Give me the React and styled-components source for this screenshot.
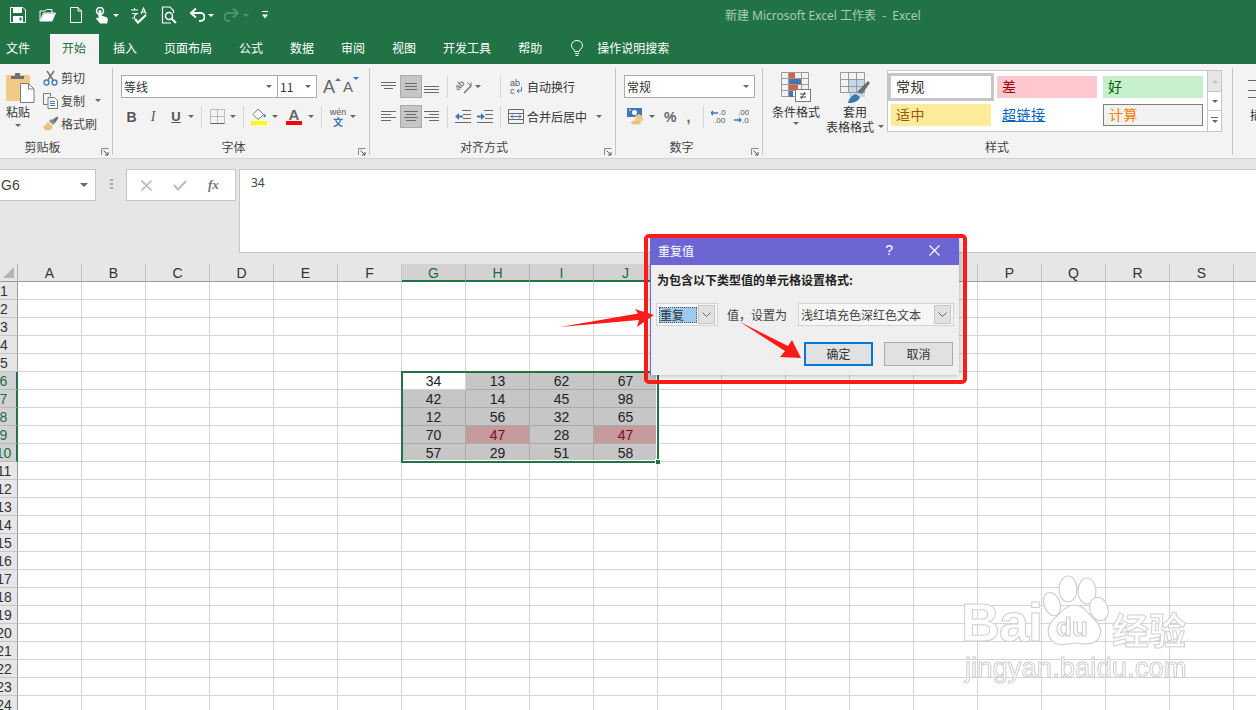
import styled, { createGlobalStyle } from 'styled-components'

const cjk = `"Noto Sans CJK SC", "Noto Sans", sans-serif`
const latin = `"Liberation Sans", "Noto Sans CJK SC", sans-serif`
const green = '#217346'

const GlobalStyle = createGlobalStyle`
  html, body { margin: 0; padding: 0; background: #fff; }
  #root { width: 1256px; height: 710px; overflow: hidden; }
  * { box-sizing: border-box; }
`

// ICONS
const Glyph = styled.svg`
  display: block;
  flex-shrink: 0;
`

const Icon = ({ w = 16, h = 16, children }) => (
  <Glyph width={w} height={h} viewBox={`0 0 ${w} ${h}`} fill="none">{children}</Glyph>
)

const SaveIcon = () => (
  <Icon>
    <path d="M.5.5h12.5l2.5 2.5v12.5H.5z" stroke="#fff" />
    <path d="M3 1h9v5H3zM3 9h10v6H3z" fill="#fff" />
    <path d="M9.5 10.500h2v3h-2z" fill={green} />
  </Icon>
)
const OpenIcon = () => (
  <Icon w={17}>
    <path d="M1 14V4h5l1.500-1.500H13V6H4.500L1 14h12l3.500-8H13" stroke="#fff" />
    <path d="M1.500 14l3.500-7.500h11L13 14z" fill="#fff" />
  </Icon>
)
const NewIcon = () => (
  <Icon w={12}>
    <path d="M.5.5h7.500l3.500 3.500v11.500H.5z" stroke="#fff" />
    <path d="M8 .5V4h3.500" stroke="#fff" />
  </Icon>
)
const TouchIcon = () => (
  <Icon w={14} h={17}>
    <circle cx="5" cy="4" r="3.500" stroke="#fff" strokeWidth="1.500" />
    <path d="M3.500 4.500a1.500 1.500 0 013 0v4l4.500 1.500c1.500.5 2 1.500 1.800 3l-.6 3.500H5L1 11.500l1-1 1.500 1z" fill="#fff" />
  </Icon>
)
const SpellIcon = () => (
  <Icon w={17} h={17}>
    <path d="M1 3h7M4.500 1v2M2 6.500h5L4.500 8.500v2.500H2M11 7l2.500-6L16 7M12 5h3" stroke="#fff" strokeWidth="1.100" />
    <path d="M5 12l3 3.500L16 8" stroke="#fff" strokeWidth="2.200" />
  </Icon>
)
const PreviewIcon = () => (
  <Icon w={16} h={18}>
    <path d="M10 17H1.500V1H9l3.500 3.500V7" stroke="#fff" strokeWidth="1.200" />
    <circle cx="8" cy="10" r="3.500" stroke="#fff" strokeWidth="1.500" />
    <path d="M10.500 12.500L15 17" stroke="#fff" strokeWidth="2" />
  </Icon>
)
const UndoIcon = () => (
  <Icon w={16} h={14}>
    <path d="M10 13h1.500a3.800 3.800 0 000-8H2" stroke="#fff" strokeWidth="2" />
    <path d="M7 .5L2 5l5 4.500" stroke="#fff" strokeWidth="2" />
  </Icon>
)
const RedoIcon = () => (
  <Icon w={16} h={14}>
    <path d="M6 13H4.500a3.800 3.800 0 010-8H14M9 .5L14 5 9 9.500" stroke="#4e9471" strokeWidth="2" />
  </Icon>
)
const CustomizeIcon = () => (
  <Icon w={8} h={10}>
    <path d="M1 1.500h6" stroke="#fff" />
    <path d="M1 4.500h6L4 8.500z" fill="#fff" />
  </Icon>
)
const BulbIcon = () => (
  <Icon w={12} h={16}>
    <path d="M3.800 11.500c0-2-3.300-3-3.300-6a5.500 5 0 0111 0c0 3-3.300 4-3.300 6z" stroke="#fff" />
    <path d="M4 13.500h4M4.500 15.500h3" stroke="#fff" />
  </Icon>
)
const PasteIcon = () => (
  <Icon w={29} h={31}>
    <rect x="0" y="3" width="24" height="26" rx="1.500" fill="#f0c987" />
    <path d="M5 7V4h4V1h5v3h4v3z" fill="#6f6f6f" />
    <path d="M14.500 11.500h8l5.500 5.500v13.500H14.500z" fill="#fff" stroke="#7a7a7a" />
    <path d="M22.500 11.500V17H28" stroke="#7a7a7a" />
  </Icon>
)
const CutIcon = () => (
  <Icon>
    <path d="M4 1l6 9M11 1L5 10" stroke="#777" strokeWidth="1.600" />
    <circle cx="3.500" cy="12.500" r="2.500" stroke="#3f78b5" strokeWidth="1.300" />
    <circle cx="11.500" cy="12.500" r="2.500" stroke="#3f78b5" strokeWidth="1.300" />
  </Icon>
)
const CopyIcon = () => (
  <Icon>
    <path d="M.5.5h7v3M.5.5v11h4" stroke="#777" />
    <path d="M5 4.500h6.500l3 3v8H5z" fill="#fff" stroke="#777" />
    <path d="M7 8.500h5M7 10.500h5M7 12.500h5" stroke="#3f78b5" />
  </Icon>
)
const BrushIcon = () => (
  <Icon>
    <path d="M0 11l5-5 5 5-3 3.500-3-.5-1 1z" fill="#e9c27f" />
    <path d="M6 5l2-2 4 4-2 2z" fill="#8a8a8a" />
    <path d="M9 4l5-3.500L15.500 2 12 7z" fill="#6f6f6f" />
  </Icon>
)
const BordersIcon = () => (
  <Icon w={15} h={15}>
    <path d="M.5.5h14v14H.5zM7.500.5v14M.5 7.500h14" stroke="#888" strokeDasharray="1 1" />
    <path d="M.5 14.500h14" stroke="#666" />
  </Icon>
)
const FillIcon = () => (
  <Icon w={17} h={17}>
    <path d="M7 1l5.500 5.500L7 11.500 2 6.500z" fill="#fff" stroke="#777" />
    <path d="M13 5.500l2 2.500-1 1.500-1.500-1z" fill="#3f78b5" />
    <rect y="13" width="16" height="4" fill="#ffff00" />
  </Icon>
)
const Lines = ({ lines, w = 16, h = 15, color = '#6a6a6a' }) => (
  <Icon w={w} h={h}>
    {lines.map(([a, b, y], i) => (
      <path key={i} d={`M${a} ${y + 0.5}H${b}`} stroke={color} />
    ))}
  </Icon>
)
const OrientIcon = () => (
  <Icon w={17} h={15}>
    <text x="0" y="0" transform="translate(2 12) rotate(-45)" fontFamily={latin} fontSize="9" fill="#555">ab</text>
    <path d="M8 14l7-7" stroke="#666" strokeWidth="1.200" />
    <path d="M11.500 3.500L15 7M15 7v-3.500" stroke="#3f78b5" />
  </Icon>
)
const IndentIcon = ({ flip }) => (
  <Icon w={16} h={13}>
    <path d="M7 .5h9M8 4.500h8M8 8.500h8M0 12.500h16" stroke="#6a6a6a" />
    {flip
      ? <path d="M0 5.500h4V3l4 3.500L4 10V7.500H0z" fill="#3f78b5" />
      : <path d="M8 5.500H4V3L0 6.500 4 10V7.500h4z" fill="#3f78b5" />}
  </Icon>
)
const WrapIcon = () => (
  <Icon w={14} h={16}>
    <text x="1" y="7" fontFamily={latin} fontSize="9" fill="#555">ab</text>
    <text x="1" y="15" fontFamily={latin} fontSize="9" fill="#555">c</text>
    <path d="M12.500 8v4H8M10 10l-2 2 2 2" stroke="#3f78b5" />
  </Icon>
)
const MergeIcon = () => (
  <Icon w={16} h={15}>
    <path d="M.5.5h15v14H.5zM.5 4.500h15M.5 10.500h15" stroke="#6a6a6a" />
    <path d="M3 7.500h10M5 5.500l-2 2 2 2M11 5.500l2 2-2 2" stroke="#3f78b5" />
  </Icon>
)
const MoneyIcon = () => (
  <Icon w={17} h={17}>
    <path d="M0 0h15v9H0z" fill="#3f78b5" />
    <circle cx="7.500" cy="4.500" r="2.500" fill="#fff" />
    <path d="M2 2h2M11 7h2" stroke="#fff" />
    <ellipse cx="12" cy="8.500" rx="4" ry="1.800" fill="#e9c27f" />
    <ellipse cx="12" cy="11.500" rx="4.500" ry="1.800" fill="#f0c987" />
    <ellipse cx="9" cy="14.500" rx="5" ry="2" fill="#e9c27f" />
  </Icon>
)
const DecimalIcon = ({ more }) => (
  <Icon w={16} h={15}>
    <text x={more ? 5 : 8} y="6" fontFamily={latin} fontSize="8" fill="#555">{more ? '.00' : '.0'}</text>
    <text x={more ? 9 : 3} y="14" fontFamily={latin} fontSize="8" fill="#555">{more ? '.0' : '.00'}</text>
    {more
      ? <path d="M1 11h7M6 9l2 2-2 2" stroke="#3f78b5" strokeWidth="1.300" />
      : <path d="M7 4H0M2 2L0 4l2 2" stroke="#3f78b5" strokeWidth="1.300" />}
  </Icon>
)
const CondIcon = () => (
  <Icon w={31} h={32}>
    <path d="M.5.5h27v24H.5zM7.500.5v24M20.500.500v24M.5 6.500h27M.5 12.500h27M.5 18.500h27" stroke="#9a9a9a" />
    <rect x="8" y="1" width="6" height="5" fill="#d8603c" />
    <rect x="8" y="7" width="12" height="5" fill="#3f78b5" />
    <rect x="8" y="13" width="9" height="5" fill="#d8603c" />
    <rect x="8" y="19" width="4" height="6" fill="#3f78b5" />
    <rect x="14.500" y="17.500" width="15" height="12" fill="#fff" stroke="#7a7a7a" />
    <path d="M19 22h6M19 25h6M24 20l-4 7" stroke="#444" />
  </Icon>
)
const TableIcon = () => (
  <Icon w={31} h={32}>
    <rect x="9" y="7" width="16" height="18" fill="#c5d7ea" />
    <path d="M.5.5h24v20H.5zM8.500.5v20M16.500.5v20M.5 7.500h24M.5 14.500h24" stroke="#9a9a9a" />
    <path d="M17 20l11-11 2 2-8 11z" fill="#6f6f6f" />
    <path d="M8 31c1-5 4-8 8-9l4 3c-1 4-6 6-12 6z" fill="#3f78b5" />
  </Icon>
)
const Launcher = () => (
  <Icon w={8} h={8}>
    <path d="M.5 7V.5H7.500" stroke="#8a8a8a" />
    <path d="M2.500 2.500L7 7M7 4v3H4" stroke="#555" />
  </Icon>
)
const XIcon = ({ color = '#bdbdbd', size = 11, sw = 1.600 }) => (
  <Icon w={size} h={size}>
    <path d={`M.5.5L${size - 0.5} ${size - 0.5}M${size - 0.5} .5L.5 ${size - 0.5}`} stroke={color} strokeWidth={sw} />
  </Icon>
)
const CheckIcon = () => (
  <Icon w={14} h={11}>
    <path d="M1 5l4 4.500L13 1" stroke="#bdbdbd" strokeWidth="2.200" />
  </Icon>
)
const ChevronIcon = () => (
  <Icon w={9} h={5}>
    <path d="M.5.5l4 4 4-4" stroke="#666" />
  </Icon>
)

// DATA
const tabs = ['文件', '开始', '插入', '页面布局', '公式', '数据', '审阅', '视图', '开发工具', '帮助']
const colLetters = 'ABCDEFGHIJKLMNOPQRST'.split('')
const rowCount = 24
const selCols = ['G', 'H', 'I', 'J']
const values = [
  [34, 13, 62, 67],
  [42, 14, 45, 98],
  [12, 56, 32, 65],
  [70, 47, 28, 47],
  [57, 29, 51, 58]
]

const valueAt = (rowNo, col) => {
  const c = selCols.indexOf(col)
  if (c < 0 || rowNo < 6 || rowNo > 10) return null
  return values[rowNo - 6][c]
}

function Sheet() {
  return (
    <SheetWrap>
      <SheetGrid>
        <Corner><CornerMark /></Corner>
        {colLetters.map((c) => (
          <ColHead key={c} $sel={selCols.includes(c)}>{c}</ColHead>
        ))}
        {Array.from({ length: rowCount }, (_, i) => i + 1).map((r) => (
          <Row key={r} r={r} />
        ))}
      </SheetGrid>
      <Selection><Handle /></Selection>
    </SheetWrap>
  )
}

function Row({ r }) {
  const sel = r >= 6 && r <= 10
  return (
    <>
      <RowHead $sel={sel}><span>{r}</span></RowHead>
      {colLetters.map((c) => {
        const v = valueAt(r, c)
        const isFirst = r === 6 && c === 'G'
        return (
          <Cell key={c} $filled={v !== null && !isFirst} $dup={v === 47}>{v}</Cell>
        )
      })}
    </>
  )
}

function Ribbon() {
  return (
    <RibbonBar>
      <Group $w={113}>
        <ClipBody>
          <PasteCol>
            <PasteIcon />
            <PasteLabel>粘贴</PasteLabel>
            <Caret />
          </PasteCol>
          <ClipList>
            <ClipRow><CutIcon /><span>剪切</span></ClipRow>
            <ClipRow><CopyIcon /><span>复制</span><Caret $ml={8} /></ClipRow>
            <ClipRow><BrushIcon /><span>格式刷</span></ClipRow>
          </ClipList>
        </ClipBody>
        <GroupLabel $pr={28}>剪贴板<LauncherSlot><Launcher /></LauncherSlot></GroupLabel>
      </Group>

      <Group $w={257}>
        <Stack $pl={8}>
          <ToolRow>
            <Combo $w={157}>等线<Caret /></Combo>
            <Combo $w={40} $ml={-1}>11<Caret /></Combo>
            <GrowLetter $size={18} $ml={6}>A<Tri $color="#3f78b5" /></GrowLetter>
            <GrowLetter $size={15} $ml={8}>A<Tri $color="#3f78b5" $down /></GrowLetter>
          </ToolRow>
          <ToolRow>
            <Tool $w={21}><BoldB>B</BoldB></Tool>
            <Tool $w={22}><ItalicI>I</ItalicI></Tool>
            <Tool $w={24}><UnderU>U</UnderU></Tool>
            <Caret $ml={0} />
            <Sep $ml={7} $mr={8} />
            <BordersIcon />
            <Caret $ml={5} />
            <Sep $ml={7} $mr={7} />
            <FillIcon />
            <Caret $ml={4} />
            <Tool $w={28} $ml={2}>
              <ColorStack>
                <ColorLetter>A</ColorLetter>
                <ColorBar />
              </ColorStack>
            </Tool>
            <Caret />
            <Sep $ml={7} $mr={8} />
            <WenStack><span>wén</span><b>文</b></WenStack>
            <Caret $ml={4} />
          </ToolRow>
        </Stack>
        <GroupLabel $pr={16}>字体<LauncherSlot><Launcher /></LauncherSlot></GroupLabel>
      </Group>

      <Group $w={246}>
        <Stack $pl={11}>
          <ToolRow>
            <Tool $w={16}><Lines lines={[[0, 15, 3], [0, 15, 6], [3, 12, 9]]} /></Tool>
            <Toggle $ml={3}><Lines lines={[[2, 14, 4], [2, 14, 7], [2, 14, 10]]} /></Toggle>
            <Tool $w={16} $ml={2}><Lines lines={[[0, 15, 7], [0, 15, 10], [0, 15, 13]]} /></Tool>
            <Sep $ml={7} $mr={8} />
            <OrientIcon />
            <Caret $ml={2} />
            <Sep $ml={19} $mr={8} />
            <WrapIcon />
            <TextLabel $ml={4}>自动换行</TextLabel>
          </ToolRow>
          <ToolRow>
            <Tool $w={16}><Lines lines={[[0, 15, 2], [0, 10, 5], [0, 15, 8], [0, 10, 11]]} /></Tool>
            <Toggle $ml={3}><Lines lines={[[1, 15, 2], [3, 13, 5], [1, 15, 8], [3, 13, 11]]} /></Toggle>
            <Tool $w={16} $ml={2}><Lines lines={[[0, 15, 2], [5, 15, 5], [0, 15, 8], [5, 15, 11]]} /></Tool>
            <Sep $ml={7} $mr={7} />
            <IndentIcon />
            <Tool $w={6} />
            <IndentIcon flip />
            <Sep $ml={7} $mr={7} />
            <MergeIcon />
            <TextLabel $ml={3}>合并后居中</TextLabel>
            <Caret $ml={9} />
          </ToolRow>
        </Stack>
        <GroupLabel $pr={18}>对齐方式<LauncherSlot><Launcher /></LauncherSlot></GroupLabel>
      </Group>

      <Group $w={147}>
        <Stack $pl={8}>
          <ToolRow>
            <Combo $w={131}>常规<Caret /></Combo>
          </ToolRow>
          <ToolRow>
            <Tool $w={3} />
            <MoneyIcon />
            <Caret $ml={5} />
            <Percent $ml={9}>%</Percent>
            <Percent $ml={10}>,</Percent>
            <Sep $ml={13} $mr={7} />
            <DecimalIcon />
            <Tool $w={6} />
            <DecimalIcon more />
          </ToolRow>
        </Stack>
        <GroupLabel $pr={16}>数字<LauncherSlot><Launcher /></LauncherSlot></GroupLabel>
      </Group>

      <Group $w={470}>
        <StyleBody>
          <BigTool $w={60}>
            <CondIcon />
            <BigLabel>条件格式</BigLabel>
            <Caret />
          </BigTool>
          <BigTool $w={58}>
            <TableIcon />
            <BigLabel>套用</BigLabel>
            <BigLabel>表格格式<Caret $ml={4} /></BigLabel>
          </BigTool>
          <Gallery>
            <StyleCells>
              <StyleCell $sel>常规</StyleCell>
              <StyleCell $bg="#ffc7ce" $color="#9c0006">差</StyleCell>
              <StyleCell $bg="#c6efce" $color="#006100">好</StyleCell>
              <StyleCell $bg="#ffeb9c" $color="#9c5700">适中</StyleCell>
              <StyleCell $color="#0563c1" $link>超链接</StyleCell>
              <StyleCell $bg="#f2f2f2" $color="#fa7d00" $boxed>计算</StyleCell>
            </StyleCells>
            <GalleryScroll>
              <ScrollBtn $h={21} $off><ScrollUp /></ScrollBtn>
              <ScrollBtn $h={19}><Caret /></ScrollBtn>
              <ScrollBtn $h={20} $more><Caret /></ScrollBtn>
            </GalleryScroll>
          </Gallery>
        </StyleBody>
        <GroupLabel $pr={2}>样式</GroupLabel>
      </Group>

      <NextGroup>
        <NextIcon><Lines w={8} h={26} color="#6a6a6a" lines={[[0, 8, 8], [0, 8, 18], [0, 8, 25]]} /></NextIcon>
        <NextLabel>插</NextLabel>
      </NextGroup>
    </RibbonBar>
  )
}

function Dialog() {
  return (
    <>
      <DialogWin>
        <DialogTitle>
          <span>重复值</span>
          <TitleHelp>?</TitleHelp>
          <TitleClose><XIcon color="#fff" size={11} sw={1.200} /></TitleClose>
        </DialogTitle>
        <DialogBody>
          <Prompt>为包含以下类型值的单元格设置格式:</Prompt>
          <OptionRow>
            <DialogCombo $w={62}>
              <Picked>重复</Picked>
              <DropBtn><ChevronIcon /></DropBtn>
            </DialogCombo>
            <OptionText>值，设置为</OptionText>
            <DialogCombo $w={156}>
              <ComboText>浅红填充色深红色文本</ComboText>
              <DropBtn><ChevronIcon /></DropBtn>
            </DialogCombo>
          </OptionRow>
          <ButtonRow>
            <DlgButton $primary>确定</DlgButton>
            <DlgButton>取消</DlgButton>
          </ButtonRow>
        </DialogBody>
      </DialogWin>
      <RedBox />
      <Arrows width="1256" height="710" viewBox="0 0 1256 710">
        <path d="M560 327L638 313.500 635 309 654 315 637 327 639 320z" fill="#fb1c17" />
        <path d="M740 322L788 346 792 340 801 358 780 357 785 351z" fill="#fb1c17" />
      </Arrows>
    </>
  )
}

function Watermark() {
  return (
    <Mark>
      <MarkTop>
        <MarkBai>Bai</MarkBai>
        <Glyph width="68" height="78" viewBox="0 0 68 78" fill="#fff" stroke="#cfcfcf" strokeWidth="1.200">
          <ellipse cx="10" cy="31" rx="8" ry="12" transform="rotate(-20 10 31)" />
          <ellipse cx="26" cy="16" rx="9" ry="13" />
          <ellipse cx="45" cy="18" rx="9" ry="13" />
          <ellipse cx="57" cy="36" rx="9" ry="12" transform="rotate(-20 57 36)" />
          <path d="M33 32c9 0 13 9 20 15 7 7 8 16 0 22-6 4-13 1-20 1s-13 4-20 0c-8-5-9-15-3-22 7-6 13-16 23-16z" />
          <text x="14" y="63" fontFamily={latin} fontWeight="700" fontSize="26">du</text>
        </Glyph>
        <MarkCn>经验</MarkCn>
      </MarkTop>
      <MarkUrl>jingyan.baidu.com</MarkUrl>
    </Mark>
  )
}

export default function App() {
  return (
    <Page>
      <GlobalStyle />
      <TitleBar>
        <Qat>
          <SaveIcon />
          <QatGap $w={13} /><OpenIcon />
          <QatGap $w={14} /><NewIcon />
          <QatGap $w={13} /><TouchIcon /><Caret $light $ml={4} />
          <QatGap $w={11} /><SpellIcon />
          <QatGap $w={14} /><PreviewIcon />
          <QatGap $w={12} /><UndoIcon /><Caret $light $ml={3} />
          <QatGap $w={10} /><RedoIcon /><Caret $dimmed $ml={3} />
          <QatGap $w={12} /><CustomizeIcon />
        </Qat>
        <TitleText>新建 Microsoft Excel 工作表&nbsp; - &nbsp;Excel</TitleText>
      </TitleBar>
      <TabBar>
        {tabs.map((t, i) => (
          <Tab key={t} $active={i === 1} $first={i === 0}>{t}</Tab>
        ))}
        <SearchTab><BulbIcon /><span>操作说明搜索</span></SearchTab>
      </TabBar>
      <Ribbon />
      <FormulaArea>
        <NameBox>G6<Caret $big /></NameBox>
        <Grip />
        <FxBox>
          <XIcon />
          <CheckIcon />
          <Fx>fx</Fx>
        </FxBox>
        <FormulaInput>34</FormulaInput>
      </FormulaArea>
      <Sheet />
      <Dialog />
      <Watermark />
    </Page>
  )
}

// STYLES
const Page = styled.div`
  position: relative;
  width: 1256px;
  height: 710px;
  overflow: hidden;
  font-family: ${cjk};
  font-size: 12px;
  color: #333;
  background: #fff;
`

const TitleBar = styled.div`
  display: flex;
  align-items: center;
  height: 34px;
  padding: 0 0 4px 10px;
  background: ${green};
`

const Qat = styled.div`
  display: flex;
  align-items: center;
  width: 715px;
`

const QatGap = styled.span`
  width: ${(p) => p.$w}px;
  flex-shrink: 0;
`

const TitleText = styled.div`
  color: #a9cdb9;
  font-family: "Noto Sans", ${cjk};
  font-size: 12px;
  white-space: nowrap;
`

const TabBar = styled.div`
  display: flex;
  height: 30px;
  background: ${green};
`

const Tab = styled.div`
  display: flex;
  align-items: center;
  height: 30px;
  padding: 0 13px 3px ${(p) => (p.$first ? 6 : p.$active ? 12 : 14)}px;
  ${(p) => p.$first && 'width: 50px;'}
  background: ${(p) => (p.$active ? '#f3f3f3' : 'transparent')};
  color: ${(p) => (p.$active ? green : '#fff')};
  font-size: 12px;
`

const SearchTab = styled.div`
  display: flex;
  align-items: center;
  gap: 14px;
  margin-left: 16px;
  padding-bottom: 3px;
  color: #fff;
`

const RibbonBar = styled.div`
  display: flex;
  height: 95px;
  background: #f3f3f3;
  border-bottom: 1px solid #d2d2d2;
`

const Group = styled.div`
  display: flex;
  flex-direction: column;
  flex-shrink: 0;
  width: ${(p) => p.$w}px;
  position: relative;
  &::after {
    content: '';
    position: absolute;
    right: 0;
    top: 4px;
    bottom: 3px;
    width: 1px;
    background: #c6c6c6;
  }
`

const GroupLabel = styled.div`
  position: relative;
  display: flex;
  align-items: center;
  justify-content: center;
  height: 20px;
  margin-bottom: 1px;
  padding: 0 ${(p) => p.$pr || 0}px 2px 0;
  color: #444;
`

const LauncherSlot = styled.span`
  position: absolute;
  right: 4px;
  bottom: 1px;
`

const ClipBody = styled.div`
  flex: 1;
  display: flex;
  padding: 2px 0 0 6px;
`

const PasteCol = styled.div`
  display: flex;
  flex-direction: column;
  align-items: flex-start;
  width: 37px;
  padding-top: 6px;
  span { margin-left: 9px; }
`

const PasteLabel = styled.div`
  margin-top: 1px;
  height: 20px;
  line-height: 16px;
  color: #333;
`

const ClipList = styled.div`
  display: flex;
  flex-direction: column;
`

const ClipRow = styled.div`
  display: flex;
  align-items: center;
  gap: 2px;
  height: 23px;
  color: #444;
`

const Stack = styled.div`
  flex: 1;
  display: flex;
  flex-direction: column;
  gap: 7px;
  padding: 11px 0 0 ${(p) => p.$pl}px;
`

const ToolRow = styled.div`
  display: flex;
  align-items: center;
  height: 23px;
`

const Tool = styled.div`
  display: flex;
  align-items: center;
  justify-content: center;
  flex-shrink: 0;
  width: ${(p) => p.$w}px;
  margin-left: ${(p) => p.$ml || 0}px;
`

const Toggle = styled.div`
  display: flex;
  align-items: center;
  justify-content: center;
  width: 22px;
  height: 23px;
  margin-left: ${(p) => p.$ml || 0}px;
  background: #c6c6c6;
  border: 1px solid #ababab;
`

const Sep = styled.span`
  flex-shrink: 0;
  width: 1px;
  height: 22px;
  margin: 0 ${(p) => p.$mr}px 0 ${(p) => p.$ml}px;
  background: #d4d4d4;
`

const Caret = styled.span`
  display: inline-block;
  flex-shrink: 0;
  width: 0;
  height: 0;
  margin-left: ${(p) => p.$ml || 0}px;
  border-style: solid;
  border-width: ${(p) => (p.$big ? '4px 4px 0' : '3px 3.5px 0')};
  border-color: ${(p) => (p.$light ? '#fff' : p.$dimmed ? '#4e9471' : '#666')} transparent transparent;
`

const Tri = styled.span`
  position: absolute;
  top: ${(p) => (p.$down ? 0 : 1)}px;
  right: -6px;
  width: 0;
  height: 0;
  border-style: solid;
  border-width: ${(p) => (p.$down ? '3px 3.5px 0' : '0 3.5px 3px')};
  border-color: ${(p) => (p.$down ? `${p.$color} transparent transparent` : `transparent transparent ${p.$color}`)};
`

const ScrollUp = styled.span`
  width: 0;
  height: 0;
  border-style: solid;
  border-width: 0 3.5px 3px;
  border-color: transparent transparent #c0c0c0;
`

const Combo = styled.div`
  display: flex;
  align-items: center;
  justify-content: space-between;
  flex-shrink: 0;
  width: ${(p) => p.$w}px;
  height: 23px;
  margin-left: ${(p) => p.$ml || 0}px;
  padding: 0 5px 1px 2px;
  background: #fff;
  border: 1px solid #ababab;
  color: #333;
`

const GrowLetter = styled.span`
  position: relative;
  margin-left: ${(p) => p.$ml}px;
  font-family: ${latin};
  font-size: ${(p) => p.$size}px;
  line-height: 20px;
  color: #666;
`

const BoldB = styled.span`
  font: bold 14px ${latin};
  color: #555;
`

const ItalicI = styled.span`
  font: italic 14px "Liberation Serif", serif;
  color: #555;
`

const UnderU = styled.span`
  font: bold 13px ${latin};
  text-decoration: underline;
  color: #555;
`

const ColorStack = styled.div`
  display: flex;
  flex-direction: column;
  align-items: center;
  width: 16px;
`

const ColorLetter = styled.span`
  font: bold 15px/13px ${latin};
  color: #666;
`

const ColorBar = styled.span`
  width: 16px;
  height: 4px;
  background: #f00;
`

const WenStack = styled.div`
  display: flex;
  flex-direction: column;
  align-items: center;
  width: 16px;
  font: 9px/10px ${latin};
  color: #555;
  b {
    font: bold 10px/10px ${cjk};
    color: #3f78b5;
  }
`

const TextLabel = styled.span`
  margin-left: ${(p) => p.$ml}px;
  white-space: nowrap;
  color: #333;
`

const Percent = styled.span`
  margin-left: ${(p) => p.$ml}px;
  font: bold 14px ${latin};
  color: #666;
`

const StyleBody = styled.div`
  flex: 1;
  display: flex;
  padding: 6px 0 0 3px;
`

const BigTool = styled.div`
  display: flex;
  flex-direction: column;
  align-items: center;
  flex-shrink: 0;
  width: ${(p) => p.$w}px;
  padding-top: 2px;
  > span { margin-top: 3px; }
`

const BigLabel = styled.div`
  display: flex;
  align-items: center;
  height: 15px;
  white-space: nowrap;
  color: #333;
`

const Gallery = styled.div`
  display: flex;
  flex-shrink: 0;
  width: 335px;
  height: 62px;
  margin-left: 3px;
  background: #fff;
  border: 1px solid #c6c6c6;
`

const StyleCells = styled.div`
  flex: 1;
  display: grid;
  grid-template-columns: repeat(3, 100px);
  grid-auto-rows: 22px;
  gap: 6px;
  padding: 5px 0 0 3px;
`

const StyleCell = styled.div`
  display: flex;
  align-items: center;
  padding: 0 0 3px 5px;
  font-size: 14px;
  letter-spacing: .5px;
  background: ${(p) => p.$bg || '#fff'};
  color: ${(p) => p.$color || '#333'};
  ${(p) => p.$sel && 'outline: 3px solid #c6c6c6;'}
  ${(p) => p.$link && 'text-decoration: underline;'}
  ${(p) => p.$boxed && 'border: 1px solid #7f7f7f;'}
`

const GalleryScroll = styled.div`
  display: flex;
  flex-direction: column;
  flex-shrink: 0;
  width: 14px;
`

const ScrollBtn = styled.div`
  position: relative;
  display: flex;
  align-items: center;
  justify-content: center;
  height: ${(p) => p.$h}px;
  background: ${(p) => (p.$off ? '#e6e6e6' : '#fff')};
  border-left: 1px solid #c6c6c6;
  border-bottom: ${(p) => (p.$more ? 0 : '1px solid #c6c6c6')};
  ${(p) => p.$more && `
    &::before {
      content: '';
      position: absolute;
      top: 6px;
      left: 3px;
      width: 7px;
      height: 1px;
      background: #666;
    }
  `}
`

const NextGroup = styled.div`
  display: flex;
  flex-direction: column;
  align-items: flex-end;
  flex: 1;
  padding-top: 8px;
  overflow: hidden;
`

const NextIcon = styled.div`
  height: 32px;
`

const NextLabel = styled.div`
  width: 6px;
  height: 16px;
  margin-top: 2px;
  overflow: hidden;
`

const FormulaArea = styled.div`
  display: flex;
  align-items: flex-start;
  height: 105px;
  padding-top: 10px;
  background: #e6e6e6;
`

const NameBox = styled.div`
  display: flex;
  align-items: center;
  justify-content: space-between;
  width: 96px;
  height: 32px;
  padding: 0 7px 0 1px;
  background: #fff;
  border: 1px solid #c6c6c6;
  border-left: 0;
  font: 14px ${latin};
  color: #444;
`

const Grip = styled.div`
  width: 3px;
  height: 11px;
  margin: 10px 13px 0 14px;
  background: repeating-linear-gradient(#a8a8a8 0 2px, transparent 2px 4px);
`

const FxBox = styled.div`
  display: flex;
  align-items: center;
  gap: 21px;
  width: 110px;
  height: 32px;
  padding-left: 14px;
  background: #fff;
  border: 1px solid #c6c6c6;
`

const Fx = styled.span`
  font: italic bold 13px "Liberation Serif", serif;
  color: #777;
`

const FormulaInput = styled.div`
  flex: 1;
  height: 84px;
  margin-left: 3px;
  padding: 3px 11px;
  background: #fff;
  border: 1px solid #c6c6c6;
  border-right: 0;
  font: 12px/20px "Noto Sans", sans-serif;
  color: #444;
`

const SheetWrap = styled.div`
  position: relative;
`

const SheetGrid = styled.div`
  display: grid;
  grid-template-columns: 18px repeat(20, 64px);
  grid-auto-rows: 18px;
  font: 14px/19px ${latin};
  color: #222;
`

const Corner = styled.div`
  position: relative;
  background: #e6e6e6;
  border-right: 1px solid #b0b0b0;
  border-bottom: 1px solid #9a9a9a;
`

const CornerMark = styled.span`
  position: absolute;
  left: 3px;
  top: 3px;
  width: 11px;
  height: 11px;
  background: #b4b4b4;
  clip-path: polygon(100% 0, 100% 100%, 0 100%);
`

const ColHead = styled.div`
  overflow: hidden;
  text-align: center;
  background: ${(p) => (p.$sel ? '#d2d2d2' : '#e6e6e6')};
  border-right: 1px solid ${(p) => (p.$sel ? '#b0b0b0' : '#c6c6c6')};
  border-bottom: ${(p) => (p.$sel ? `2px solid ${green}` : '1px solid #9a9a9a')};
  color: ${(p) => (p.$sel ? '#1f6b42' : '#333')};
`

const RowHead = styled.div`
  display: flex;
  justify-content: center;
  overflow: hidden;
  padding-right: 9px;
  background: ${(p) => (p.$sel ? '#d2d2d2' : '#e6e6e6')};
  border-right: ${(p) => (p.$sel ? `2px solid ${green}` : '1px solid #9a9a9a')};
  border-bottom: 1px solid ${(p) => (p.$sel ? '#b8b8b8' : '#c6c6c6')};
  color: ${(p) => (p.$sel ? '#1f6b42' : '#333')};
  span { flex-shrink: 0; }
`

const Cell = styled.div`
  overflow: hidden;
  text-align: center;
  background: ${(p) => (p.$dup ? '#c49a9d' : p.$filled ? '#c6c6c6' : '#fff')};
  border-right: 1px solid ${(p) => (p.$filled ? '#aaa' : '#d4d4d4')};
  border-bottom: 1px solid ${(p) => (p.$filled ? '#aaa' : '#d4d4d4')};
  color: ${(p) => (p.$dup ? '#7f0c14' : '#222')};
`

const Selection = styled.div`
  position: absolute;
  left: 401px;
  top: 107px;
  width: 258px;
  height: 92px;
  border: 2px solid ${green};
  box-shadow: inset -1px -1px 0 #fff;
  pointer-events: none;
`

const Handle = styled.span`
  position: absolute;
  right: -4px;
  bottom: -4px;
  width: 4px;
  height: 4px;
  background: ${green};
  border: 1px solid #fff;
  box-sizing: content-box;
`

const DialogWin = styled.div`
  position: absolute;
  left: 650px;
  top: 238px;
  width: 309px;
  height: 137px;
  background: #efefef;
  border-left: 1px solid #6b66d3;
  box-shadow: 1px 1px 6px rgba(0, 0, 0, .3);
`

const DialogTitle = styled.div`
  display: flex;
  align-items: center;
  height: 27px;
  margin-left: -1px;
  padding: 0 0 3px 8px;
  background: #6b66d3;
  color: #fff;
  font-size: 12px;
`

const TitleHelp = styled.span`
  margin-left: auto;
  font: 14px ${latin};
`

const TitleClose = styled.span`
  margin: 0 19px 0 36px;
`

const DialogBody = styled.div`
  display: flex;
  flex-direction: column;
  padding: 7px 5px 0 5px;
`

const Prompt = styled.div`
  height: 16px;
  line-height: 16px;
  padding-left: 1px;
  font-weight: 700;
  font-size: 12px;
  color: #222;
  white-space: nowrap;
`

const OptionRow = styled.div`
  display: flex;
  align-items: center;
  margin-top: 15px;
`

const DialogCombo = styled.div`
  display: flex;
  align-items: center;
  flex-shrink: 0;
  width: ${(p) => p.$w}px;
  height: 23px;
  padding: 2px;
  background: #f6f6f6;
  border: 1px solid #d4d4d4;
`

const Picked = styled.span`
  flex: 1;
  height: 16px;
  line-height: 14px;
  background: #9dcbef;
  border: 1px dotted #555;
  color: #333;
`

const ComboText = styled.span`
  flex: 1;
  font-size: 12px;
  color: #444;
  white-space: nowrap;
`

const DropBtn = styled.span`
  display: flex;
  align-items: center;
  justify-content: center;
  flex-shrink: 0;
  width: 17px;
  height: 19px;
  margin-left: 1px;
  background: #e1e1e1;
  border: 1px solid #c6c6c6;
`

const OptionText = styled.span`
  width: 80px;
  padding-left: 9px;
  color: #444;
`

const ButtonRow = styled.div`
  display: flex;
  justify-content: flex-end;
  gap: 11px;
  margin: 16px 1px 0 0;
`

const DlgButton = styled.div`
  display: flex;
  align-items: center;
  justify-content: center;
  width: 69px;
  height: 24px;
  padding-bottom: 1px;
  background: #e1e1e1;
  border: ${(p) => (p.$primary ? '2px solid #0078d7' : '1px solid #adadad')};
  color: #333;
`

const RedBox = styled.div`
  position: absolute;
  left: 644px;
  top: 234px;
  width: 323px;
  height: 150px;
  border: 4px solid #fb1c17;
  border-radius: 5px;
  pointer-events: none;
`

const Arrows = styled.svg`
  position: absolute;
  left: 0;
  top: 0;
  pointer-events: none;
`

const Mark = styled.div`
  position: absolute;
  left: 961px;
  top: 573px;
  width: 235px;
  pointer-events: none;
  color: #fff;
  -webkit-text-stroke: 1px #cfcfcf;
  filter: blur(.3px);
`

const MarkTop = styled.div`
  display: flex;
  align-items: flex-end;
  height: 78px;
`

const MarkBai = styled.div`
  width: 81px;
  font: bold 54px/56px ${latin};
  letter-spacing: -1px;
  margin-bottom: 1px;
`

const MarkCn = styled.div`
  margin-left: 2px;
  font: bold 37px/44px ${cjk};
  white-space: nowrap;
`

const MarkUrl = styled.div`
  margin: 1px 0 0 4px;
  font: 27.500px/32px ${latin};
  white-space: nowrap;
`
